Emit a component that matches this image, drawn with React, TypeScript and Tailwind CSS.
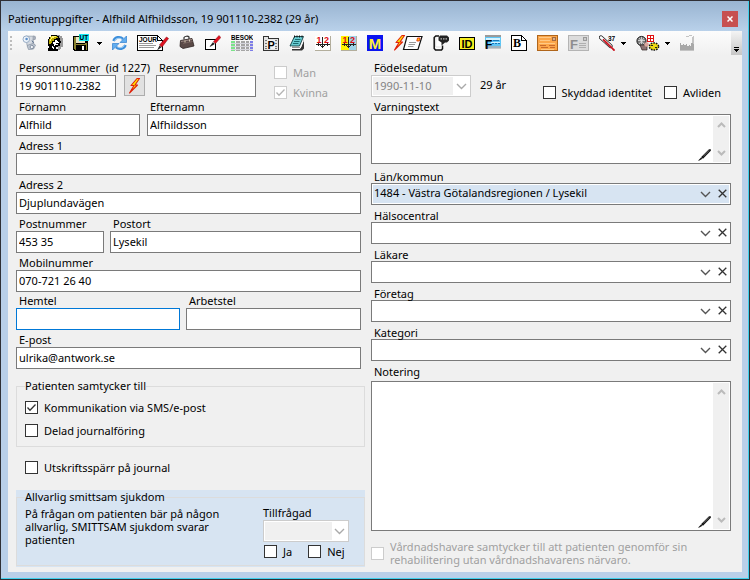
import React, { useState } from 'react';

type FieldProps = {
  id: string;
  label: string;
  value?: string;
  focused?: boolean;
};

const Field: React.FC<FieldProps> = ({ id, label, value = '', focused }) => {
  const [text, setText] = useState(value);
  return (
    <div className="min-w-0">
      <label htmlFor={id} className="block whitespace-pre pl-[3px] pt-[3px] leading-[14px]">{label}</label>
      <input
        id={id}
        type="text"
        value={text}
        onChange={(e) => setText(e.target.value)}
        className={`block h-[22px] w-full border bg-white px-[2px] pb-[2px] outline-none focus:border-[#0078d7] ${focused ? 'border-[#0078d7]' : 'border-[#7a7a7a]'}`}
      />
    </div>
  );
};

type CheckProps = {
  label: string;
  checked?: boolean;
  disabled?: boolean;
};

const Check: React.FC<CheckProps> = ({ label, checked = false, disabled }) => {
  const [on, setOn] = useState(checked);
  return (
    <label className={`flex items-center gap-[6px] leading-[13px] ${disabled ? 'text-[#a0a0a0]' : ''}`}>
      <span className="relative flex h-[13px] w-[13px] shrink-0">
        <input
          type="checkbox"
          checked={on}
          disabled={disabled}
          onChange={() => setOn(!on)}
          className="h-[13px] w-[13px] appearance-none border border-[#333] bg-white disabled:border-[#ccc]"
        />
        {on && (
          <svg viewBox="0 0 13 13" className="pointer-events-none absolute inset-0 h-[13px] w-[13px]" fill="none" stroke={disabled ? '#b4b4b4' : '#333'} strokeWidth="1.3">
            <path d="M2.5 6.5 5 9.2 10.5 3.5" />
          </svg>
        )}
      </span>
      <span>{label}</span>
    </label>
  );
};

const Chevron = ({ className, stroke = '#555' }: { className?: string; stroke?: string }) => (
  <svg viewBox="0 0 11 7" className={`h-[7px] w-[11px] ${className ?? ''}`} fill="none" stroke={stroke} strokeWidth="1.4">
    <path d="M1 1 5.5 5.5 10 1" />
  </svg>
);

type ComboProps = {
  id: string;
  label: string;
  value?: string;
};

const Combo: React.FC<ComboProps> = ({ id, label, value = '' }) => {
  const [selected, setSelected] = useState(value);
  const tone = selected ? 'bg-[#d7e4f2]' : 'bg-white';
  return (
    <div>
      <label htmlFor={id} className="block pl-[3px] pt-1 leading-[13px]">{label}</label>
      <div className="flex h-[22px] border border-[#7a7a7a] bg-white p-px">
        <div className={`relative flex-1 ${tone}`}>
          <select
            id={id}
            value={selected}
            onChange={(e) => setSelected(e.target.value)}
            className="block h-full w-full appearance-none bg-transparent pb-[2px] pl-px pr-5 outline-none"
          >
            <option value=""></option>
            {value && <option value={value}>{value}</option>}
          </select>
          <Chevron className="pointer-events-none absolute right-[3px] top-[6px]" />
        </div>
        <button type="button" aria-label={`Rensa ${label}`} onClick={() => setSelected('')} className={`flex w-[15px] items-center justify-center pb-px pl-px ${tone}`}>
          <svg viewBox="0 0 9 9" className="h-[9px] w-[9px]" stroke="#333" strokeWidth="1.3">
            <path d="M.7.7l7.6 7.6M8.3.7.7 8.3" />
          </svg>
        </button>
      </div>
    </div>
  );
};

const NoteBox = ({ id, label, height, labelPad = 'pt-[3px]' }: { id: string; label: string; height: string; labelPad?: string }) => (
  <div>
    <label htmlFor={id} className={`block pl-[3px] leading-[14px] ${labelPad}`}>{label}</label>
    <div className={`flex border border-[#7a7a7a] bg-white p-px ${height}`}>
      <div className="relative flex-1">
        <textarea id={id} className="block h-full w-full resize-none overflow-hidden bg-transparent px-px outline-none" />
        <svg viewBox="0 0 13 13" className="pointer-events-none absolute bottom-px right-[2px] h-[13px] w-[13px]">
          <path d="M0 12.8 3 9.6l1.400 1.200L1.400 12.600Z" fill="#111" />
          <path d="M3 9.200 11 1.200h1.800v1.600L5 10.800Z" fill="#111" />
          <path d="M5.500 8 11.3 2.300" stroke="#8a8a8a" strokeWidth=".8" />
        </svg>
      </div>
      <div className="flex w-4 flex-col items-center justify-between bg-[#f0f0f0] py-[6px]">
        <svg viewBox="0 0 9 6" className="h-[6px] w-[9px]" fill="none" stroke="#bbb" strokeWidth="2"><path d="M1 5 4.5 1.5 8 5" /></svg>
        <svg viewBox="0 0 9 6" className="h-[6px] w-[9px]" fill="none" stroke="#bbb" strokeWidth="2"><path d="M1 1 4.5 4.5 8 1" /></svg>
      </div>
    </div>
  </div>
);

/* ---- Toolbar ---- */

type ToolProps = {
  title: string;
  width?: number;
  menu?: boolean;
  menuGap?: string;
  children: React.ReactNode;
};

const Tool: React.FC<ToolProps> = ({ title, width = 16, menu, menuGap = 'gap-[5px]', children }) => (
  <button type="button" title={title} aria-label={title} className={`flex shrink-0 items-center ${menuGap}`}>
    <svg width={width} height="18" viewBox={`0 0 ${width} 18`} shapeRendering="crispEdges" fontFamily="Liberation Sans, sans-serif" fontWeight="bold">
      {children}
    </svg>
    {menu && (
      <svg width="5" height="3" viewBox="0 0 5 3" shapeRendering="crispEdges"><path d="M0 0h5v1H0zM1 1h3v1H1zM2 2h1v1H2z" /></svg>
    )}
  </button>
);

const Bolt = () => (
  <g shapeRendering="auto">
    <path d="M9 1.500 3 8.500h3L1.500 16 9.500 8H7L11.500 1.500Z" fill="#ffe600" stroke="#e0200c" strokeWidth="1.100" strokeLinejoin="round" />
  </g>
);

const Toolbar = () => (
  <div className="flex h-[24px] shrink-0 bg-gradient-to-b from-[#fcfcfc] to-[#f0f0f0]">
    <div className="flex min-w-0 flex-1 items-center gap-[10px] overflow-hidden pl-[2px]">
      <svg width="3" height="16" viewBox="0 0 3 16" className="mr-[-1px] shrink-0" fill="#bdbdbd" shapeRendering="crispEdges">
        <path d="M0 1h2v2H0zM0 5h2v2H0zM0 9h2v2H0zM0 13h2v2H0z" />
      </svg>
      <Tool title="Recept" width={15}>
        <g shapeRendering="auto">
          <path d="M4 2.200h8l1.500 1.300-.5 1.500h-2l1 6.500-3 3L5 11Z" fill="#d5dae1" stroke="#98a2b0" strokeWidth=".8" />
          <path d="M11 2.200h2.200v3.300H11Z" fill="#aeb6c1" stroke="#8d96a3" strokeWidth=".6" />
          <circle cx="4.300" cy="5.200" r="3.300" fill="#eef4fb" stroke="#8fa5c0" strokeWidth=".9" />
          <circle cx="4.600" cy="5" r="1.300" fill="#5d8fc9" />
          <path d="M5 11.500 11 9.500l2.500 1.500-2 4-5 .5Z" fill="#c2c9d3" stroke="#8c97a6" strokeWidth=".8" />
          <circle cx="9.800" cy="13" r="1.700" fill="#f4f6f9" stroke="#7a889b" strokeWidth=".9" />
          <path d="M10 6.500 11.500 9" stroke="#5a6f8c" />
        </g>
      </Tool>
      <Tool title="Patient">
        <path d="M10 1h3v1h2v2h1v9h-2v2h-1v1h-2v-4h1z" fill="#9a9a9a" />
        <path d="M4 1h6v1h2v2h1v3h1v2h-1v3h-2v1H9v2h2v2H1v-3h1v-2H1V5h1V3h2z" fill="#000" />
        <path d="M4 2h6v1h1v1H9v1H7v2H5v2H4v1H2V5h1V3h1z" fill="#b9a900" />
        <path d="M5 2h4v1H7v1H5v1H4v2H3V5h1V3h1z" fill="#fff36a" />
        <path d="M8 6h3v2h1v1h-1v2H8v1H7v-2H6V8h2z" fill="#fff" />
        <path d="M10 6h1v1h-1zM9 9h2v1H9z" fill="#000" />
        <path d="M5 12h1v1h1v2H6v-1H5z" fill="#fff" />
      </Tool>
      <Tool title="Spara och stäng" menu menuGap="gap-2">
        <path d="M0 2h15v15H1v-1H0z" fill="#000" />
        <path d="M1 3h2v7h9V9h2v7h-1v-5H3v5H2v-1H1z" fill="#8c8430" />
        <path d="M3 3h9v6H3z" fill="#e9e6c8" />
        <path d="M9 12h2v4H9z" fill="#fff" />
        <path d="M6 0h10v7H6z" fill="#15e5f2" />
        <text x="6.500" y="6" fontSize="6.500" fill="#000">UT</text>
      </Tool>
      <Tool title="Uppdatera" width={15}>
        <g shapeRendering="auto" fill="none" stroke="#3b8edb" strokeWidth="2.600">
          <path d="M1.500 7C3 3 8 2 11 5" />
          <path d="M13.500 11C12 15 7 16 4 13" />
          <path d="M14.500 2v6.500H8Z" fill="#62aef0" stroke="#2f7fcf" strokeWidth=".7" />
          <path d="M.5 16V9.500H7Z" fill="#62aef0" stroke="#2f7fcf" strokeWidth=".7" />
          <path d="M2.500 6.500C4 4 8 3.500 10 5.500M12.500 11.500C11 14 7 14.500 5 12.500" stroke="#b5dcfb" strokeWidth=".8" />
        </g>
      </Tool>
      <Tool title="Journal" width={32}>
        <path d="M.5 1.500h20l5 5v10H.5z" fill="#fff" stroke="#000" />
        <path d="M20.500 1.500v5h5" fill="none" stroke="#000" />
        <path d="M2 9h14v1H2zM2 11h17v1H2zM2 13h15v1H2z" fill="#999" />
        <text x="2" y="7.800" fontSize="6.500" fill="#000">JOUR</text>
        <g shapeRendering="auto">
          <path d="M20 16.500 22.500 11.500l2 1.800Z" fill="#222" />
          <path d="M22.500 11 29.500 3l2 1.500-6.500 8.500Z" fill="#e11220" stroke="#8d0a12" strokeWidth=".6" />
        </g>
      </Tool>
      <Tool title="Väska">
        <g shapeRendering="auto">
          <path d="M5 5.500V3.500C6 2 9 1.800 10 3v2" fill="none" stroke="#333" strokeWidth="1.200" />
          <path d="M1.500 6.500 13 4.500 15 12 4 14.500 1 12.500Z" fill="#5b4a47" stroke="#2e2423" strokeWidth=".8" />
          <path d="M2 7.500 13 5.500" stroke="#9b8783" />
          <path d="M4 9.500 13.500 7.500" stroke="#77625e" />
          <path d="M6 6.500v2M10.500 5.500v2" stroke="#d6c9b0" />
        </g>
      </Tool>
      <Tool title="Redigera">
        <path d="M.5 5.500h10v10H.5z" fill="#fff" stroke="#000" />
        <g shapeRendering="auto">
          <path d="M5 12.500 8 8.500l1.500 1.500Z" fill="#111" stroke="#111" strokeWidth=".5" />
          <path d="M8.500 7.500 14 1.500l1.800 2L10.500 9.500Z" fill="#e11220" stroke="#8d0a12" strokeWidth=".5" />
        </g>
      </Tool>
      <Tool title="Besök" width={22}>
        <text x="0" y="5.500" fontSize="6.300">BESÖK</text>
        <path d="M0 7h4v10H0z" fill="#7be38a" />
        <path d="M5 7h4v10H5zM10 7h4v10h-4zM15 7h3v10h-3z" fill="#a5a5a5" />
        <path d="M19 7h3v10h-3z" fill="#7d7de8" />
        <path d="M0 9h22v1H0zM0 12h22v1H0zM0 15h22v1H0z" fill="#d4d4dc" />
      </Tool>
      <Tool title="Provsvar">
        <path d="M.5 2.500h5v2h10v12H.5z" fill="#e4e4e4" stroke="#333" />
        <path d="M2 6h12v1H2zM2 9h12v1H2zM2 12h12v1H2zM2 14h12v1H2z" fill="#777" />
        <path d="M4 6h8v9H4z" fill="#f2f2f2" />
        <text x="4.500" y="14.500" fontSize="11">P</text>
      </Tool>
      <Tool title="Anteckningar">
        <g shapeRendering="auto">
          <path d="M3 13.500h9l3-8v9L13 16.500H3Z" fill="#333" />
          <path d="M5.500 2.500h9L10.500 12H1Z" fill="#68cdd3" stroke="#123c40" strokeWidth=".9" />
          <path d="M2.500 12.500v2H11l3.500-8" fill="none" stroke="#fff" />
          <path d="M6 5.500h5.500M5 7.500h5.500M4 9.500h5.500" stroke="#1b6a70" />
          <path d="M5.500 3.500v-2M8 3.500v-2M10.500 3.500v-2M13 3.500v-2" stroke="#111" />
        </g>
      </Tool>
      <Tool title="Tandstatus">
        <path d="M0 2h16v15H0z" fill="#fff" />
        <path d="M15 2h1v15h-1zM0 16h16v1H0z" fill="#b3ae9c" />
        <path d="M7 3h1v11H7zM1 10h14v1H1zM5 11h1v1H5zM9 11h1v1H9zM6 12h3v1H6zM3 9h1v3H3zM12 9h1v3h-1z" fill="#222" />
        <g fill="#e00a12"><text x="1.500" y="9" fontSize="9">1</text><text x="9" y="9" fontSize="9">2</text></g>
      </Tool>
      <Tool title="Tandstatus färg">
        <path d="M0 2h8v15H0z" fill="#fff200" />
        <path d="M8 2h8v15H8z" fill="#9fd3e8" />
        <path d="M15 2h1v15h-1zM0 16h16v1H0z" fill="#b3ae9c" />
        <path d="M7 3h1v11H7zM1 10h14v1H1zM5 11h1v1H5zM9 11h1v1H9zM6 12h3v1H6zM3 9h1v3H3zM12 9h1v3h-1z" fill="#222" />
        <g fill="#e00a12"><text x="1.500" y="9" fontSize="9">1</text><text x="9" y="9" fontSize="9">2</text></g>
      </Tool>
      <Tool title="Meddelande">
        <path d="M0 1h16v16H0z" fill="#0a14f0" />
        <text x="8" y="14.500" fontSize="15" textAnchor="middle" fill="#ffee3a">M</text>
      </Tool>
      <Tool title="Skicka snabbmeddelande" width={30}>
        <Bolt />
        <g shapeRendering="auto">
          <path d="M14 2.500h15L25 15.500H10.500Z" fill="#fff" stroke="#111" strokeWidth="1.200" />
          <path d="M16 8.500h7M15.500 10.500h6.500M15 12.500h5.500" stroke="#999" />
          <path d="M24.500 4h2.500l-.7 3h-2.500Z" fill="#ffd400" stroke="#e02010" strokeWidth=".8" />
        </g>
      </Tool>
      <Tool title="SMS">
        <g shapeRendering="auto">
          <path d="M6 2H2.800L1.200 3.500v11L2.500 16h6L9.500 14.800V11.500" fill="#fff" stroke="#111" strokeWidth="1.500" />
          <path d="M3 3.500 2.500 13h6" fill="none" stroke="#ddd" />
          <path d="M7 1.500h7l2 2v3l-2 2h-2L8.500 11.500V8.500L5.500 6.500v-3Z" fill="#222" />
          <path d="M7.500 4.800h1.500M10 4.800h1.500M12.500 4.800h1.500" stroke="#bbb" strokeWidth="1.200" />
        </g>
      </Tool>
      <Tool title="ID">
        <path d="M.5 3.500h15v12H.5z" fill="#f6ee1f" stroke="#000" />
        <text x="8" y="13.500" fontSize="11" textAnchor="middle">ID</text>
      </Tool>
      <Tool title="Faktura">
        <path d="M0 1h16v2H0z" fill="#9a9a9a" />
        <path d="M0 3h16v9H0z" fill="#5fc6f5" />
        <path d="M1 4h14v2H1zM6 8h9v1H6z" fill="#d6f3ff" />
        <path d="M7 9h2v1H7zM10 9h2v1h-2zM13 9h2v1h-2zM8 6h6v1H8z" fill="#1a78b8" />
        <path d="M0 12h16v2H0z" fill="#9fb3be" />
        <path d="M0 14h16v1H0z" fill="#c8c8c8" />
        <text x="0" y="15" fontSize="12">F</text>
      </Tool>
      <Tool title="Brev">
        <path d="M.5 1.500h10l5 5v10H.5z" fill="#fff" stroke="#000" />
        <path d="M10.500 1v5.500H16" fill="none" stroke="#000" />
        <text x="2" y="13" fontSize="12" fontFamily="Liberation Serif, serif">B</text>
      </Tool>
      <Tool title="Vykort" width={21}>
        <path d="M.5 1.500h20v15H.5z" fill="#fba64a" stroke="#b0651a" />
        <path d="M2 3h12v1H2zM3 6h10v1H3zM2 9h16v1H2zM4 15h13v1H4z" fill="#ffc985" />
        <path d="M3 11h6v1H3zM4 13h7v1H4zM12 11h6v1h-6zM13 13h5v1h-5z" fill="#c96a2c" />
        <path d="M15.500 3.500h3v3h-3z" fill="#d9b08a" stroke="#a56a40" />
      </Tool>
      <Tool title="Fax" width={21}>
        <path d="M.5 1.500h20v15H.5z" fill="#dcdcdc" stroke="#b4b4b4" />
        <path d="M11 9h7v1h-7zM11 11h7v1h-7zM11 13h7v1h-7z" fill="#b0b0b0" />
        <path d="M15.500 3.500h3v3h-3z" fill="#ccc" stroke="#999" />
        <text x="2" y="14.500" fontSize="13" fill="#8e8e8e">F</text>
      </Tool>
      <Tool title="Temperatur" width={17} menu>
        <g shapeRendering="auto">
          <path d="M2 3.500 11.500 12" stroke="#222" strokeWidth="4.200" strokeLinecap="round" />
          <path d="M2 3.500 11.500 12" stroke="#fff" strokeWidth="2.600" strokeLinecap="round" />
          <path d="M4.500 5.800 15 16" stroke="#cc1420" strokeWidth="1.800" strokeLinecap="round" strokeDasharray="2 .6" />
        </g>
        <text x="9" y="6.500" fontSize="6.500">37</text>
      </Tool>
      <Tool title="Smitta" width={24} menu>
        <g shapeRendering="auto">
          <circle cx="5.500" cy="7" r="4.600" fill="#777" stroke="#222" />
          <path d="M2 6.500h7M5.500 3v7M3 4l5 6M8 4l-5 6" stroke="#e5e5e5" strokeWidth=".8" />
          <path d="M4 11h7v5H6Z" fill="#8d7372" stroke="#2e2222" strokeWidth=".7" />
          <circle cx="10.500" cy="10.500" r="2.300" fill="#dba79d" />
          <ellipse cx="18" cy="12.500" rx="4.600" ry="3.600" fill="#ecd913" stroke="#111" strokeWidth="1.500" strokeDasharray="1.600 1" />
          <path d="M15 11h2v1h-2zM19 13h2v1h-2z" fill="#222" />
        </g>
        <path d="M11.500 1.500h6v6h-6z" fill="#fff" stroke="#e01010" />
        <path d="M14 2h1v5h-1zM12 4h5v1h-5z" fill="#e01010" />
      </Tool>
      <Tool title="Statistik" width={15}>
        <path d="M0 16V9h1v2h2v-1h1v1h2v-1h1v2h2v-1h1v1h1V9h3v7z" fill="#a8a8a8" />
        <path d="M12 3h1v6h-1zM6 2h3v1H6zM9 1h3v1H9zM13 2h1v8h-1zM0 16h14v1H0z" fill="#c4c4c4" />
      </Tool>
    </div>
    <button type="button" aria-label="Fler verktyg" className="flex w-[11px] shrink-0 items-end justify-center bg-gradient-to-b from-[#f4f4f4] to-[#c6c6c6] pb-[2px]">
      <svg width="7" height="7" viewBox="0 0 7 7" shapeRendering="crispEdges">
        <path d="M1 1h5v1H1zM1 3h5v1H1zM2 4h3v1H2zM3 5h1v1H3z" />
      </svg>
    </button>
  </div>
);

const LeftColumn = () => (
  <div className="min-w-0">
    <div className="pr-1">
      <div className="grid grid-cols-[100fr_29fr_216fr] items-start">
        <Field id="pnr" label="Personnummer  (id 1227)" value="19 901110-2382" />
        <div className="flex pl-2 pt-[17px]">
          <button type="button" aria-label="Hämta uppgifter" className="flex h-[21px] w-[21px] shrink-0 items-center justify-center border border-[#adadad] bg-[#e1e1e1]">
            <svg width="13" height="18" viewBox="0 0 13 18"><Bolt /></svg>
          </button>
        </div>
        <div className="flex">
          <div className="flex-1 pl-[11px]"><Field id="reserv" label="Reservnummer" /></div>
          <div className="-mb-[2px] flex w-[105px] flex-col gap-[7px] pl-[18px] pt-2">
            <Check label="Man" disabled />
            <Check label="Kvinna" checked disabled />
          </div>
        </div>
      </div>
      <div className="grid grid-cols-[124fr_214fr] gap-x-[7px]">
        <Field id="fornamn" label="Förnamn" value="Alfhild" />
        <Field id="efternamn" label="Efternamn" value="Alfhildsson" />
      </div>
      <Field id="adress1" label="Adress 1" />
      <Field id="adress2" label="Adress 2" value="Djuplundavägen" />
      <div className="grid grid-cols-[88fr_251fr] gap-x-[6px]">
        <Field id="postnr" label="Postnummer" value="453 35" />
        <Field id="postort" label="Postort" value="Lysekil" />
      </div>
      <Field id="mobil" label="Mobilnummer" value="070-721 26 40" />
      <div className="-mt-px grid grid-cols-[164fr_175fr] gap-x-[6px]">
        <Field id="hemtel" label="Hemtel" focused />
        <Field id="arbetstel" label="Arbetstel" />
      </div>
      <Field id="epost" label="E-post" value="ulrika@antwork.se" />
    </div>

    {/* Consent */}
    <fieldset className="mt-[10px] border border-[#dcdcdc] pb-[9px] pl-2">
      <legend className="leading-[14px]">Patienten samtycker till</legend>
      <div className="flex flex-col items-start gap-[10px] pt-2">
        <Check label="Kommunikation via SMS/e-post" checked />
        <Check label="Delad journalföring" />
      </div>
    </fieldset>

    <div className="flex pb-4 pl-[9px] pt-[14px]">
      <Check label="Utskriftsspärr på journal" />
    </div>

    {/* Infectious disease */}
    <div className="bg-[#d7e4f2] pb-px">
      <fieldset className="border border-[#dcdcdc] pb-[7px] pl-2 pr-[15px]">
        <legend className="leading-[14px]">Allvarlig smittsam sjukdom</legend>
        <div className="flex items-start justify-between">
          <p className="max-w-[210px] pt-[3px] leading-[13px]">
            På frågan om patienten bär på någon allvarlig, SMITTSAM sjukdom svarar patienten
          </p>
          <div className="w-[86px] pt-[2px]">
            <label htmlFor="tillfragad" className="block leading-[14px]">Tillfrågad</label>
            <div className="relative h-[22px] border border-[#ccc] bg-white p-px">
              <select id="tillfragad" disabled className="block h-full w-[67px] appearance-none bg-[#f0f0f0]"><option></option></select>
              <Chevron className="pointer-events-none absolute right-[3px] top-[7px]" stroke="#aaa" />
            </div>
            <div className="flex gap-4 pl-px pt-[3px]">
              <Check label="Ja" />
              <Check label="Nej" />
            </div>
          </div>
        </div>
      </fieldset>
    </div>
  </div>
);

const RightColumn = () => (
  <div className="min-w-0">
    <div className="flex items-end">
      <div>
        <label htmlFor="fodd" className="block pl-[3px] pt-[3px] leading-[14px]">Födelsedatum</label>
        <div className="relative h-[22px] w-[100px] border border-[#ccc] bg-white p-px">
          <select id="fodd" disabled className="block h-full w-[80px] appearance-none bg-[#f0f0f0] pl-px text-[#838383] opacity-100">
            <option>1990-11-10</option>
          </select>
          <Chevron className="pointer-events-none absolute right-[3px] top-[7px]" stroke="#aaa" />
        </div>
      </div>
      <span className="pb-[5px] pl-[9px] leading-[14px]">29 år</span>
      <div className="-mb-[2px] ml-auto flex gap-3 pr-[10px]">
        <Check label="Skyddad identitet" />
        <Check label="Avliden" />
      </div>
    </div>
    <NoteBox id="varning" label="Varningstext" height="h-[50px]" />
    <div className="pt-[2px]">
      <Combo id="lan" label="Län/kommun" value="1484 - Västra Götalandsregionen / Lysekil" />
      <Combo id="halso" label="Hälsocentral" />
      <Combo id="lakare" label="Läkare" />
      <Combo id="foretag" label="Företag" />
      <Combo id="kategori" label="Kategori" />
    </div>
    <NoteBox id="notering" label="Notering" height="h-[150px]" labelPad="pt-1 pb-[2px]" />
    <div className="pt-[9px]">
      <Check label="Vårdnadshavare samtycker till att patienten genomför sin rehabilitering utan vårdnadshavarens närvaro." disabled />
    </div>
  </div>
);

export default function App() {
  return (
    <div className="flex min-h-screen flex-col border border-[#2f2f35] bg-[#b9cfe8] font-['Noto_Sans','Open_Sans',sans-serif] text-[11px] text-black">
      <div className="flex flex-1 flex-col border-b border-r border-[#3fd0ec]">
        <header className="flex h-[30px] shrink-0 items-center justify-between bg-gradient-to-b from-[#99b4d1] to-[#b9d1ea] pl-[7px] pr-[10px] pt-[6px]">
          <h1 className="text-[11px]">Patientuppgifter - Alfhild Alfhildsson, 19 901110-2382 (29 år)</h1>
          <button type="button" aria-label="Stäng" className="flex h-4 w-4 items-center justify-center bg-[#c75050]">
            <svg viewBox="0 0 6 6" className="h-[6px] w-[6px]" stroke="#fff" strokeWidth="1.500"><path d="M.5.5l5 5M5.500.5l-5 5" /></svg>
          </button>
        </header>
        <div className="mb-[6px] ml-[7px] mr-[6px] flex flex-1 flex-col bg-[#f0f0f0]">
          <Toolbar />
          <main className="grid grid-cols-[349fr_360fr] gap-x-[6px] pb-1 pl-2 pr-[11px] pt-[3px]">
            <LeftColumn />
            <RightColumn />
          </main>
        </div>
      </div>
    </div>
  );
}
